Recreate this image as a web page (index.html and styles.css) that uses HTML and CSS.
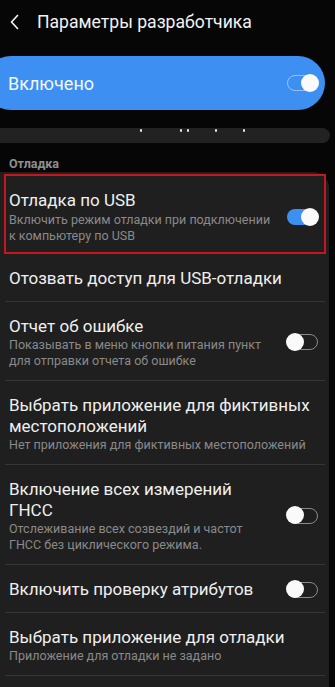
FILE: index.html
```html
<!DOCTYPE html>
<html lang="ru">
<head>
<meta charset="utf-8">
<title>Параметры разработчика</title>
<link rel="stylesheet" href="styles.css">
</head>
<body>
<header class="header">
  <svg class="back" width="10" height="16" viewBox="0 0 10 16"><path d="M7.5 1.5 L1.5 8 L7.5 14.5" fill="none" stroke="#f2f2f2" stroke-width="1.7" stroke-linecap="round" stroke-linejoin="round"/></svg>
  <h1 class="title">Параметры разработчика</h1>
</header>

<div class="master">
  <span class="master-label">Включено</span>
  <span class="tg tg-master"></span>
</div>

<div class="strip">
  <span class="dot d1"></span><span class="dot d2"></span><span class="dot d3"></span><span class="dot d4"></span><span class="dot d5"></span>
</div>

<div class="section">Отладка</div>

<div class="card">
  <div class="row row-hl">
    <div class="text">
      <div class="t">Отладка по USB</div>
      <div class="s">Включить режим отладки при подключении к компьютеру по USB</div>
    </div>
    <span class="tg tg-on"></span>
  </div>
  <div class="row">
    <div class="text">
      <div class="t">Отозвать доступ для USB-отладки</div>
    </div>
  </div>
  <div class="row">
    <div class="text">
      <div class="t">Отчет об ошибке</div>
      <div class="s">Показывать в меню кнопки питания пункт для отправки отчета об ошибке</div>
    </div>
    <span class="tg tg-off"></span>
  </div>
  <div class="row">
    <div class="text">
      <div class="t">Выбрать приложение для фиктивных местоположений</div>
      <div class="s">Нет приложения для фиктивных местоположений</div>
    </div>
  </div>
  <div class="row">
    <div class="text">
      <div class="t">Включение всех измерений ГНСС</div>
      <div class="s">Отслеживание всех созвездий и частот ГНСС без циклического режима.</div>
    </div>
    <span class="tg tg-off"></span>
  </div>
  <div class="row">
    <div class="text">
      <div class="t">Включить проверку атрибутов</div>
    </div>
    <span class="tg tg-off"></span>
  </div>
  <div class="row">
    <div class="text">
      <div class="t">Выбрать приложение для отладки</div>
      <div class="s">Приложение для отладки не задано</div>
    </div>
  </div>
</div>
</body>
</html>
```
FILE: styles.css
```css
html, body {
  margin: 0;
  padding: 0;
}
body {
  width: 335px;
  height: 687px;
  overflow: hidden;
  background: #060606;
  font-family: Roboto, "Noto Sans", "DejaVu Sans", sans-serif;
  color: #f0f0f0;
}
.header {
  height: 44px;
  display: flex;
  align-items: center;
  padding-left: 10px;
}
.back {
  display: block;
  flex: none;
}
.title {
  margin: 0 0 0 17px;
  font-size: 17.6px;
  font-weight: 400;
  color: #f2f2f2;
}
.master {
  margin: 12px 10px 0 -16px;
  height: 54px;
  border-radius: 27px;
  background: #3e8ff2;
  display: flex;
  align-items: center;
  justify-content: space-between;
  padding: 0 7px 0 24px;
}
.master-label {
  font-size: 18px;
  color: #f5f8ff;
}
.tg {
  position: relative;
  flex: none;
  width: 31px;
  height: 16px;
  margin-left: 12px;
  border-radius: 8px;
  box-sizing: border-box;
}
.tg::after {
  content: "";
  position: absolute;
  top: -2px;
  width: 18px;
  height: 18px;
  border-radius: 50%;
  background: #fafafa;
}
.tg-master {
  border: 1.5px solid rgba(255, 255, 255, 0.45);
}
.tg-master::after {
  right: -2px;
  top: -2.5px;
}
.tg-on {
  background: #3e8ff2;
}
.tg-on::after {
  right: -1px;
  top: -1px;
}
.tg-off {
  border: 1.5px solid #8a8a8a;
}
.tg-off::after {
  left: -2px;
  top: -2.5px;
}
.strip {
  position: relative;
  margin: 18px 5px 0 -10px;
  height: 15px;
  border-radius: 8px;
  background: #222222;
}
.dot {
  position: absolute;
  top: 1px;
  width: 2px;
  height: 3px;
  background: #e8e8e8;
  border-radius: 1px;
}
.d1 { left: 150px; }
.d2 { left: 190px; }
.d3 { left: 197px; }
.d4 { left: 225px; }
.d5 { left: 253px; }
.section {
  margin: 13px 0 0 9px;
  height: 16px;
  line-height: 16px;
  font-size: 12.5px;
  font-weight: 700;
  color: #8f8f8f;
}
.card {
  margin-right: 6px;
  padding-top: 2px;
  border-radius: 0 16px 0 0;
  background: #1f1f1f;
  min-height: 520px;
}
.row {
  box-sizing: border-box;
  min-height: 48px;
  display: flex;
  align-items: center;
  margin: 0 4px 0 5px;
  padding: 14px 7px 11px 4px;
  border-bottom: 1px solid #363636;
}
.row-hl {
  margin: 0 3px 0 4px;
  padding: 13.5px 6px 8px 3px;
  border: 2px solid #c8161d;
}
.text {
  flex: 1;
  min-width: 0;
}
.t {
  font-size: 17px;
  line-height: 21px;
  color: #efefef;
}
.s {
  font-size: 12.5px;
  line-height: 16px;
  color: #8a8a8a;
}
.row-hl .s {
  margin-top: 1px;
}
```
